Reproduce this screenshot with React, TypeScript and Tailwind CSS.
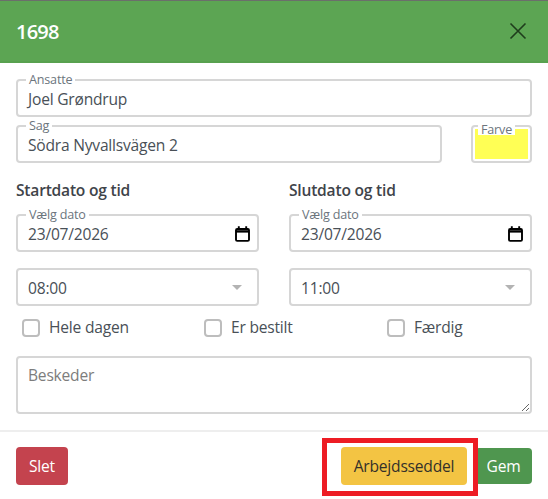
import React from "react";

const text = "text-[15.6px] tracking-[-0.22px]";
const small = "text-[12.6px] tracking-[-0.2px]";

function Field({ label, value, className = "" }: { label: string; value: string; className?: string }) {
  return (
    <div className={`relative h-[38px] rounded-[4px] border-2 border-[#d6d6d6] pl-[10px] flex items-center pt-[4px] ${text} text-[#495057] ${className}`}>
      <span className={`absolute left-[8px] top-[-9px] bg-white px-[3px] ${small} leading-[16px] text-[#6c757d]`}>{label}</span>
      <span>{value}</span>
    </div>
  );
}

function DateField() {
  return (
    <div className={`relative h-[38px] rounded-[4px] border-2 border-[#d6d6d6] pl-[10px] pr-[7px] flex items-center justify-between pt-[3px] ${text} text-[#495057]`}>
      <span className={`absolute left-[8px] top-[-9px] bg-white px-[3px] ${small} leading-[16px] text-[#6c757d]`}>Vælg dato</span>
      <span>23/07/2026</span>
      <svg className="relative top-[-1px]" width="15" height="16" viewBox="0 0 15 16" fill="none" stroke="#000" strokeWidth="1.9">
        <rect x="1" y="3" width="13" height="11.9" rx="1.2" />
        <path d="M1 5.4h13" strokeWidth="2.4" />
        <path d="M3.8 0.3v3M11.2 0.3v3" />
      </svg>
    </div>
  );
}

function SelectField({ value }: { value: string }) {
  return (
    <div className={`h-[38px] rounded-[4px] border-2 border-[#d6d6d6] pl-[10px] pr-[15px] flex items-center justify-between ${text} text-[#495057]`}>
      <span className="relative top-[1.5px]">{value}</span>
      <span className="w-0 h-0 border-x-[5px] border-x-transparent border-t-[5px] border-t-[#b3b3b3]" />
    </div>
  );
}

function Check({ label, className = "" }: { label: string; className?: string }) {
  return (
    <label className={`flex items-center gap-[9px] ${text} text-[#495057] ${className}`}>
      <span className="w-[18px] h-[18px] rounded-[4px] border-2 border-[#bdbdbd] bg-white" />
      <span>{label}</span>
    </label>
  );
}

export default function App() {
  return (
    <div className="relative w-[548px] h-[499px] bg-white overflow-hidden font-['Open_Sans',sans-serif]">
      <div className="h-[63px] border-t border-t-[#6b6f6b] border-b-2 border-b-[#58a14f] bg-[#5ca553] flex items-center justify-between pl-[16px] pr-[21px]">
        <span className="text-[20px] tracking-[-0.8px] font-semibold text-white leading-none pt-[2px]">1698</span>
        <svg width="18" height="18" viewBox="0 0 18 18" stroke="#1f3d1c" strokeWidth="1.6" fill="none">
          <path d="M1.5 1.5l15 15M16.5 1.5l-15 15" />
        </svg>
      </div>

      <div className="px-[16px] pt-[16px]">
        <Field label="Ansatte" value="Joel Grøndrup" />
        <div className="flex mt-[8px] justify-between">
          <Field label="Sag" value="Södra Nyvallsvägen 2" className="w-[426px]" />
          <div className="relative w-[61px] h-[38px] rounded-[4px] border-2 border-[#d6d6d6] p-[2px]">
            <div className="h-full bg-[#ffff55]" />
            <span className={`absolute left-[5px] top-[-3px] bg-white px-[3px] ${small} leading-[11px] text-[#6c757d]`}>Farve</span>
          </div>
        </div>

        <div className="grid grid-cols-2 gap-x-[30px] mt-[16px]">
          <div>
            <div className="text-[15.6px] tracking-[-0.22px] font-semibold leading-[22px] text-[#3f444a] mb-[13px]">Startdato og tid</div>
            <DateField />
            <div className="mt-[16px]"><SelectField value="08:00" /></div>
          </div>
          <div>
            <div className="text-[15.6px] tracking-[-0.22px] font-semibold leading-[22px] text-[#3f444a] mb-[13px]">Slutdato og tid</div>
            <DateField />
            <div className="mt-[16px]"><SelectField value="11:00" /></div>
          </div>
        </div>

        <div className="flex mt-[11px] pl-[6px] h-[22px]">
          <Check label="Hele dagen" className="w-[182px]" />
          <Check label="Er bestilt" className="w-[183px]" />
          <Check label="Færdig" />
        </div>

        <textarea
          placeholder="Beskeder"
          className="block w-full h-[58px] mt-[17px] rounded-[4px] border-2 border-[#d6d6d6] px-[10px] py-[5px] text-[15.6px] tracking-[-0.22px] leading-[24px] placeholder:text-[#7d7d7d] outline-none"
        />
      </div>

      <div className="mt-[16px] border-t-2 border-t-[#eeeeee] px-[16px] pt-[15px] flex items-center justify-between">
        <button className={`h-[38px] w-[52px] rounded-[4px] bg-[#c4434e] text-white pt-[1px] ${text}`}>Slet</button>
        <div className="flex items-center gap-[8px]">
          <button className={`h-[38px] w-[126px] rounded-[4px] bg-[#f3c443] text-[#33302a] pt-[1px] ${text}`}>Arbejdsseddel</button>
          <button className={`h-[36px] w-[57px] rounded-[4px] bg-[#4f964f] text-white pt-[1px] ${text}`}>Gem</button>
        </div>
      </div>

      <div className="absolute left-[322px] top-[438px] w-[156px] h-[58px] border-[5px] border-[#ed1c24]" />
    </div>
  );
}
